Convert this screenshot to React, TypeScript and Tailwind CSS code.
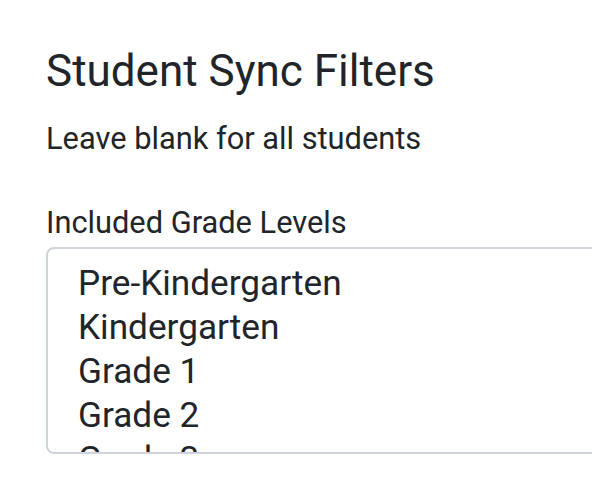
import React from 'react'

const grades = [
  'Pre-Kindergarten',
  'Kindergarten',
  'Grade 1',
  'Grade 2',
  'Grade 3',
  'Grade 4',
  'Grade 5',
]

export default function App() {
  return (
    <div
      className="min-h-screen w-[592px] h-[494px] overflow-hidden bg-white text-[#212529] pl-[46px] pt-[45px]"
      style={{ fontFamily: 'Roboto, "Noto Sans", sans-serif' }}
    >
      <h2 className="text-[44px] leading-[52.8px] font-normal">Student Sync Filters</h2>
      <p className="mt-[18.6px] text-[30.8px] leading-[46.2px]">Leave blank for all students</p>

      <div className="mt-[37.3px]">
        <label className="block text-[30.8px] leading-[46.2px]">Included Grade Levels</label>
        <div className="mt-px w-[620px] h-[207px] overflow-hidden rounded-lg border-2 border-[#ced4da] pl-[30px] pt-[12px]">
          {grades.map((g) => (
            <div key={g} className="text-[35.2px] leading-[44px]">
              {g}
            </div>
          ))}
        </div>
      </div>
    </div>
  )
}
